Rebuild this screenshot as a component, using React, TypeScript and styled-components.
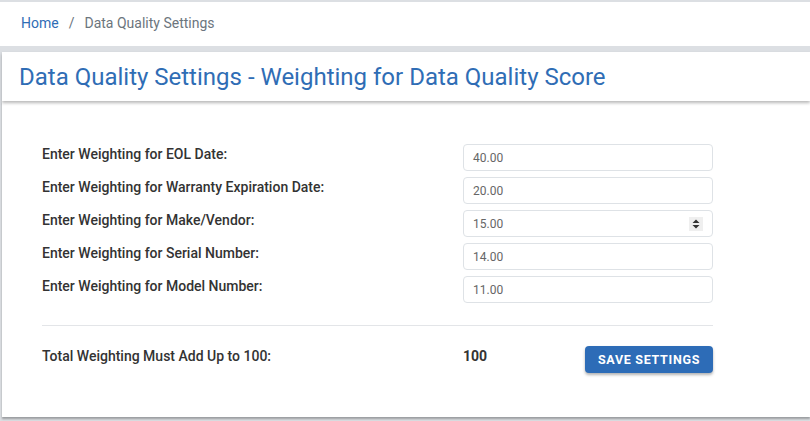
import React from 'react'
import styled, { createGlobalStyle } from 'styled-components'

const GlobalStyle = createGlobalStyle`
	html, body {
		margin: 0;
		padding: 0;
		background: #dcdfe3;
		font-family: Roboto, 'Liberation Sans', Arial, sans-serif;
	}
	* { box-sizing: border-box; }
`

const Page = styled.div`
	width: 810px;
	height: 421px;
	overflow: hidden;
	padding-top: 2px;
`

const Breadcrumb = styled.nav`
	height: 44px;
	background: #fff;
	display: flex;
	align-items: center;
	padding: 0 0 2px 21px;
	font-size: 14px;
	color: #6c757d;

	a {
		color: #2f6db5;
		text-decoration: none;
	}

	.sep {
		padding: 0 10px;
		color: #6c757d;
	}
`

const HeaderCard = styled.div`
	margin: 6px 0 0 2px;
	height: 49px;
	background: #fff;
	display: flex;
	align-items: center;
	padding-left: 17px;
	box-shadow: 0 2px 3px rgba(0, 0, 0, 0.28);
	position: relative;
	z-index: 1;

	h1 {
		margin: 0;
		font-size: 24px;
		font-weight: 400;
		color: #2f6db5;
	}
`

const BodyCard = styled.div`
	margin-left: 2px;
	height: 316px;
	background: #fff;
	padding: 43px 0 0 40px;
	box-shadow: 0 2px 2px rgba(0, 0, 0, 0.3);
`

const FormGrid = styled.div`
	display: grid;
	grid-template-columns: 421px 250px;
	row-gap: 6px;
	align-items: center;
`

const Label = styled.label`
	font-size: 14px;
	font-weight: 500;
	color: #333;
	padding-bottom: 7px;
`

const InputWrap = styled.div`
	position: relative;
	height: 27px;
	border: 1px solid #dee2e6;
	border-radius: 4px;
	display: flex;
	align-items: center;
	padding-left: 9px;
	font-size: 12px;
	color: #666;
`

const Spinner = styled.span`
	position: absolute;
	right: 9px;
	top: 6px;
	width: 14px;
	height: 14px;
	background: #efefef;
	display: flex;
	align-items: center;
	justify-content: center;
`

const Divider = styled.hr`
	width: 671px;
	margin: 22px 0 0;
	border: 0;
	border-top: 1px solid #e3e5e8;
`

const TotalRow = styled.div`
	display: grid;
	grid-template-columns: 421px 122px 128px;
	align-items: center;
	margin-top: 20px;
`

const TotalValue = styled.span`
	font-size: 14px;
	font-weight: 700;
	color: #333;
	padding-bottom: 8px;
`

const SaveButton = styled.button`
	height: 27px;
	border: 0;
	border-radius: 4px;
	background: #2d6cb7;
	color: #fff;
	font-family: inherit;
	font-size: 12.5px;
	font-weight: 700;
	letter-spacing: 0.7px;
	text-transform: uppercase;
	box-shadow: 0 2px 3px rgba(0, 0, 0, 0.3);
`

const fields = [
	{ label: 'Enter Weighting for EOL Date:', value: '40.00' },
	{ label: 'Enter Weighting for Warranty Expiration Date:', value: '20.00' },
	{ label: 'Enter Weighting for Make/Vendor:', value: '15.00', spin: true },
	{ label: 'Enter Weighting for Serial Number:', value: '14.00' },
	{ label: 'Enter Weighting for Model Number:', value: '11.00' },
]

export default function App() {
	return (
		<Page>
			<GlobalStyle />
			<Breadcrumb>
				<a href='#'>Home</a>
				<span className='sep'>/</span>
				<span>Data Quality Settings</span>
			</Breadcrumb>
			<HeaderCard>
				<h1>Data Quality Settings - Weighting for Data Quality Score</h1>
			</HeaderCard>
			<BodyCard>
				<FormGrid>
					{fields.map(f => (
						<React.Fragment key={f.label}>
							<Label>{f.label}</Label>
							<InputWrap>
								{f.value}
								{f.spin && (
									<Spinner>
										<svg width='8' height='10' viewBox='0 0 8 10'>
											<path d='M4 0.5 L7.5 4 H0.5 Z M0.5 6 H7.5 L4 9.5 Z' fill='#333' />
										</svg>
									</Spinner>
								)}
							</InputWrap>
						</React.Fragment>
					))}
				</FormGrid>
				<Divider />
				<TotalRow>
					<Label>Total Weighting Must Add Up to 100:</Label>
					<TotalValue>100</TotalValue>
					<SaveButton>Save Settings</SaveButton>
				</TotalRow>
			</BodyCard>
		</Page>
	)
}
